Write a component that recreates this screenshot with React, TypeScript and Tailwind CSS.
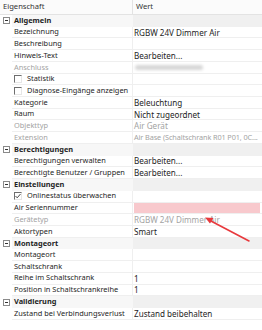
import React from 'react'

type Row =
  | { kind: 'cat'; label: string }
  | { kind: 'prop'; label: string; value?: string; dim?: boolean; check?: 'on' | 'off'; blur?: boolean; pink?: boolean; tight?: boolean }

const rows: Row[] = [
  { kind: 'cat', label: 'Allgemein' },
  { kind: 'prop', label: 'Bezeichnung', value: 'RGBW 24V Dimmer Air' },
  { kind: 'prop', label: 'Beschreibung' },
  { kind: 'prop', label: 'Hinweis-Text', value: 'Bearbeiten...' },
  { kind: 'prop', label: 'Anschluss', dim: true, blur: true },
  { kind: 'prop', label: 'Statistik', check: 'off' },
  { kind: 'prop', label: 'Diagnose-Eingänge anzeigen', check: 'off' },
  { kind: 'prop', label: 'Kategorie', value: 'Beleuchtung' },
  { kind: 'prop', label: 'Raum', value: 'Nicht zugeordnet' },
  { kind: 'prop', label: 'Objekttyp', value: 'Air Gerät', dim: true },
  { kind: 'prop', label: 'Extension', value: 'Air Base (Schaltschrank R01 P01, 0C...', dim: true, tight: true },
  { kind: 'cat', label: 'Berechtigungen' },
  { kind: 'prop', label: 'Berechtigungen verwalten', value: 'Bearbeiten...' },
  { kind: 'prop', label: 'Berechtigte Benutzer / Gruppen', value: 'Bearbeiten...' },
  { kind: 'cat', label: 'Einstellungen' },
  { kind: 'prop', label: 'Onlinestatus überwachen', check: 'on' },
  { kind: 'prop', label: 'Air Seriennummer', pink: true },
  { kind: 'prop', label: 'Gerätetyp', value: 'RGBW 24V Dimmer Air', dim: true },
  { kind: 'prop', label: 'Aktortypen', value: 'Smart' },
  { kind: 'cat', label: 'Montageort' },
  { kind: 'prop', label: 'Montageort' },
  { kind: 'prop', label: 'Schaltschrank' },
  { kind: 'prop', label: 'Reihe im Schaltschrank', value: '1' },
  { kind: 'prop', label: 'Position in Schaltschrankreihe', value: '1' },
  { kind: 'cat', label: 'Validierung' },
  { kind: 'prop', label: 'Zustand bei Verbindungsverlust', value: 'Zustand beibehalten' },
]

function Minus() {
  return (
    <svg width="7" height="7" viewBox="0 0 7 7" className="block">
      <rect x="0.5" y="0.5" width="6" height="6" fill="white" stroke="#8a8a8a" />
      <line x1="2" y1="3.5" x2="5" y2="3.5" stroke="#333" />
    </svg>
  )
}

function Check({ on }: { on: boolean }) {
  return (
    <span className="relative w-[8px] h-[8px] border-l border-t border-[#6e6e6e] border-r border-b border-r-[#e6e6e6] border-b-[#e6e6e6] bg-white shrink-0">
      {on && (
        <svg width="8" height="8" viewBox="0 0 8 8" className="absolute -left-px -top-px">
          <path d="M1.5 4 L3.2 5.8 L6.5 2" fill="none" stroke="#333" strokeWidth="0.9" />
        </svg>
      )}
    </span>
  )
}

export default function App() {
  return (
    <div
      className="relative w-[262px] h-[330px] bg-white overflow-hidden text-[7.4px] leading-none text-[#1e1e1e]"
      style={{ fontFamily: '"Segoe UI", "Noto Sans", sans-serif' }}
    >
      <div className="flex h-[15px] border-b border-[#e3e3e3] bg-[#fbfbfb] text-[#333] text-[7.6px]">
        <div className="w-[133px] flex items-center pl-[3px] border-r border-[#e3e3e3]">Eigenschaft</div>
        <div className="flex-1 flex items-center pl-[3px]">Wert</div>
      </div>
      {rows.map((r, i) =>
        r.kind === 'cat' ? (
          <div key={i} className="flex h-[11.72px]">
            <div className="w-[12px] flex items-center justify-center">
              <Minus />
            </div>
            <div className="w-[121px] flex items-center pl-[2px] font-bold bg-[#f7f7f7]">{r.label}</div>
            <div className="flex-1 bg-[#f0f0f0] border-b border-[#f0f0f0]" />
          </div>
        ) : (
          <div key={i} className="flex h-[11.72px]">
            <div className="w-[12px]" />
            <div
              className={
                'w-[121px] flex items-center gap-[5px] pl-[2px] border-b border-r border-[#efefef] whitespace-nowrap ' +
                (r.dim ? 'text-[#a3a3a3]' : '')
              }
            >
              {r.check && <Check on={r.check === 'on'} />}
              {r.label}
            </div>
            <div
              className={
                'flex-1 min-w-0 flex items-center pl-[1px] pr-[2px] border-b border-[#efefef] whitespace-nowrap ' +
                (r.tight ? 'text-[7.3px] tracking-[-0.1px] ' : 'text-[8.1px] ') +
                (r.dim ? 'text-[#a3a3a3]' : '')
              }
            >
              {r.value && <span className="leading-[11px]">{r.value}</span>}
              {r.blur && <div className="ml-[1px] w-[68px] h-[5px] rounded-full bg-[#d6d6d6] blur-[1.5px]" />}
              {r.pink && <div className="w-[126px] h-full bg-[#f8c9cd]" />}
            </div>
          </div>
        ),
      )}
      <svg className="absolute left-0 top-0 pointer-events-none" width="262" height="330">
        <line x1="249" y1="241" x2="209" y2="220" stroke="#e8393d" strokeWidth="1.6" strokeLinecap="round" />
        <path d="M205 217.5 L213.5 218 L210 223.5 Z" fill="#e8393d" />
      </svg>
    </div>
  )
}
